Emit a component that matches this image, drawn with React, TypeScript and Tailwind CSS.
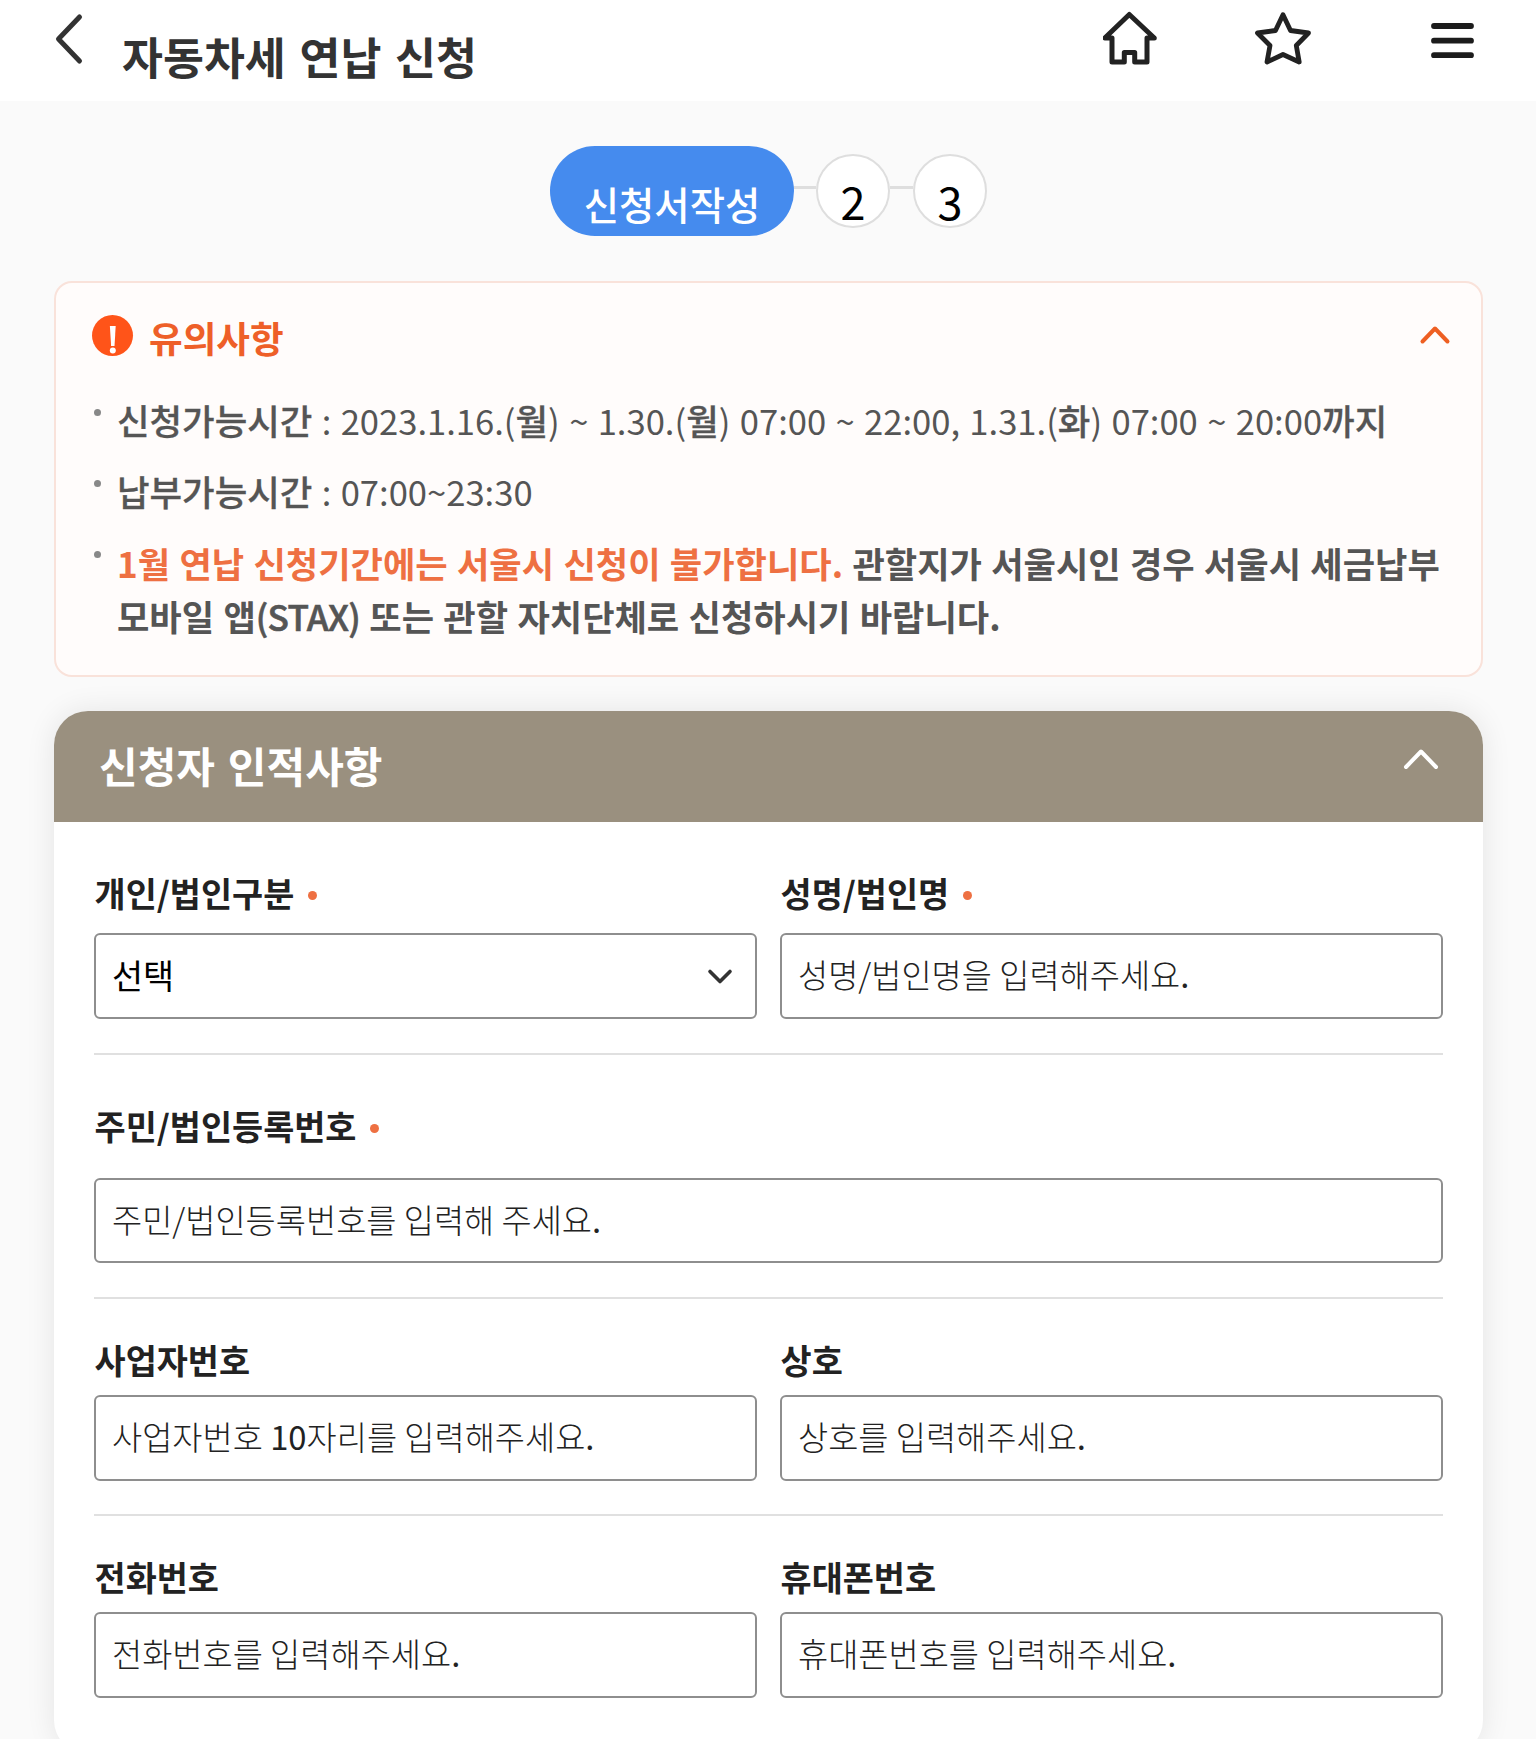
import React, { useState } from 'react';

interface FieldProps {
  label: string;
  required?: boolean;
  className?: string;
  children: React.ReactNode;
}

const Field: React.FC<FieldProps> = ({ label, required, className = 'gap-[11px]', children }) => (
  <div className={`flex flex-1 flex-col ${className}`}>
    <div className="flex h-[48px] items-center pl-[0.6px] pt-[1px] text-[33.8px] font-bold text-[#222]">
      <span>{label}</span>
      {required && <span className="ml-[13.6px] mt-[3px] size-[9px] rounded-full bg-[#ee7042]" />}
    </div>
    {children}
  </div>
);

const InputBox: React.FC<{ className?: string; children: React.ReactNode }> = ({ className = 'h-[86px]', children }) => (
  <div className={`flex items-center rounded-[6px] border-2 border-[#8e8e8e] bg-white px-[16px] pb-[4px] text-[32.8px] font-light text-[#222] ${className}`}>
    <span>{children}</span>
  </div>
);

const Row: React.FC<{ className: string; children: React.ReactNode }> = ({ className, children }) => (
  <div className={`flex gap-[23px] border-[#e0e0e0] ${className}`}>{children}</div>
);

const NoticeItem: React.FC<{ className?: string; children: React.ReactNode }> = ({ className = '', children }) => (
  <li className={`flex leading-[53px] text-[#555] ${className}`}>
    <span className="mr-[16px] mt-[15px] size-[7px] shrink-0 rounded-full bg-[#888]" />
    <p className="h-full whitespace-nowrap">{children}</p>
  </li>
);

// Hangul is set slightly heavier and larger than the digits around it
const Ko: React.FC<{ children: React.ReactNode }> = ({ children }) => (
  <span className="text-[35.4px] font-medium leading-none [-webkit-text-stroke:0.3px_#555]">{children}</span>
);

const App: React.FC = () => {
  const [noticeOpen, setNoticeOpen] = useState(true);
  const [formOpen, setFormOpen] = useState(true);

  return (
    <div className="h-[1739px] w-[1536px] overflow-hidden bg-[#fafafa] font-['Noto_Sans_CJK_KR',sans-serif]">
      {/* Header */}
      <header className="flex h-[101px] items-start bg-white">
        <svg className="ml-[54px] mt-[12px] shrink-0" width="30" height="54" viewBox="0 0 30 54" fill="none" stroke="#333" strokeWidth="5" strokeLinecap="round" strokeLinejoin="round">
          <path d="M25.5 5 L4.5 27 L25.5 49" />
        </svg>
        <h1 className="ml-[38px] mt-[23px] text-[44.5px] font-bold leading-[66px] text-[#333] [word-spacing:3.6px]">자동차세 연납 신청</h1>
        <div className="ml-auto mr-[59px] mt-[10px] flex items-start">
          <svg width="58" height="58" viewBox="0 0 58 58" fill="none" stroke="#222" strokeWidth="5" strokeLinejoin="round">
            <path d="M26.300 4.500 L1.800 28 H9 V52 H21.300 V42.500 H31.700 V52 H44 V28 H51.300 Z" />
          </svg>
          <svg className="ml-[93px] mr-[1px]" width="58" height="58" viewBox="0 0 58 58" fill="none" stroke="#222" strokeWidth="4.800" strokeLinejoin="round">
            <path d="M29 4.700 L36.500 20.500 L54.500 23 L42.300 35.500 L45.200 52 L29 44.500 L13 52 L16 35.500 L3.500 23 L21.500 20.500 Z" />
          </svg>
          <svg className="ml-[114px]" width="50" height="58" viewBox="0 0 50 58" fill="none" stroke="#1c1c1c" strokeWidth="5.800" strokeLinecap="round">
            <path d="M7 16 H44 M7 30.700 H44 M7 45.200 H44" />
          </svg>
        </div>
      </header>

      {/* Steps */}
      <div className="mt-[45px] flex h-[90px] items-center justify-center pl-[1px]">
        <div className="flex h-[90px] w-[244px] items-end justify-center rounded-full bg-[#458bee] pb-[5px] text-[38.4px] font-medium leading-[56px] text-white">
          신청서작성
        </div>
        <div className="mb-[8px] h-[3px] w-[22px] bg-[#dedede]" />
        <div className="flex size-[74px] items-end justify-center rounded-full border-2 border-[#dedede] bg-white text-[45px] leading-[51px] text-black">
          2
        </div>
        <div className="mb-[8px] h-[3px] w-[23px] bg-[#dedede]" />
        <div className="flex size-[74px] items-end justify-center rounded-full border-2 border-[#dedede] bg-white text-[45px] leading-[51px] text-black">
          3
        </div>
      </div>

      {/* Notice */}
      <section className="mx-[54px] mt-[45px] h-[396px] w-[1429px] rounded-[18px] border-2 border-[#f9e2da] bg-[#fffcfb] pl-[36px]">
        <div className="mt-[31px] flex h-[42px] items-start">
          <svg width="42" height="42" viewBox="0 0 42 42">
            <circle cx="20.500" cy="21.500" r="20.500" fill="#ff5419" />
            <path d="M17.900 12 H23.700 L22.500 32 H19.100 Z" fill="#fff" />
            <circle cx="20.800" cy="36.500" r="3" fill="#fff" />
          </svg>
          <h2 className="ml-[15px] -mt-[3px] text-[36.6px] font-bold leading-[54px] text-[#ee5f28]">유의사항</h2>
          <button className="ml-auto mr-[29px] mt-[10px]" onClick={() => setNoticeOpen(!noticeOpen)}>
            <svg width="34" height="22" viewBox="0 0 34 22" fill="none" stroke="#ee5f22" strokeWidth="4" strokeLinecap="round" strokeLinejoin="round">
              <path d="M4.500 17.500 L17 4.500 L29.500 17.500" />
            </svg>
          </button>
        </div>
        {noticeOpen && (
          <ul className="ml-[2px] mt-[38px]">
            <NoticeItem className="h-[53px] text-[34.6px] [word-spacing:1.6px]">
              <Ko>신청가능시간</Ko> : 2023.1.16.(<Ko>월</Ko>) ~ 1.30.(<Ko>월</Ko>) 07:00 ~ 22:00, 1.31.(<Ko>화</Ko>) 07:00 ~ 20:00<Ko>까지</Ko>
            </NoticeItem>
            <NoticeItem className="mt-[18px] h-[53px] text-[34.6px] [word-spacing:1.6px]">
              <Ko>납부가능시간</Ko> : 07:00~23:30
            </NoticeItem>
            <NoticeItem className="mt-[18px] text-[35.2px] font-bold [word-spacing:1.3px]">
              <span className="text-[#ee7042]">1월 연납 신청기간에는 서울시 신청이 불가합니다.</span> 관할지가 서울시인 경우 서울시 세금납부
              <br />
              모바일 앱<span className="font-medium tracking-[-0.7px] [-webkit-text-stroke:0.6px_#555]">(STAX)</span> 또는 관할 자치단체로 신청하시기 바랍니다.
            </NoticeItem>
          </ul>
        )}
      </section>

      {/* Applicant form */}
      <section className="mx-[54px] mt-[34px] h-[1043px] w-[1429px] overflow-hidden rounded-[34px] bg-white shadow-[0_0_30px_rgba(0,0,0,0.09)]">
        <div className="flex h-[111px] items-center bg-[#9a907f] pl-[45px] pr-[42px] text-white">
          <h2 className="mb-[3px] text-[42px] font-bold leading-[60px] [word-spacing:3.4px]">신청자 인적사항</h2>
          <button className="mb-[16px] ml-auto" onClick={() => setFormOpen(!formOpen)}>
            <svg width="40" height="26" viewBox="0 0 40 26" fill="none" stroke="currentColor" strokeWidth="4" strokeLinecap="round" strokeLinejoin="round">
              <path d="M5 21 L20 5.500 L35 21" />
            </svg>
          </button>
        </div>
        {formOpen && (
          <div className="px-[40px]">
            <Row className="h-[233px] border-b-2 pt-[47px]">
              <Field label="개인/법인구분" required className="gap-[16px]">
                <div className="flex h-[86px] items-center justify-between rounded-[6px] border-2 border-[#8e8e8e] bg-white pl-[16px] pr-[21px] text-[33.8px] text-black">
                  <span className="mb-[2px]">선택</span>
                  <svg width="28" height="20" viewBox="0 0 28 20" fill="none" stroke="#333" strokeWidth="3.600" strokeLinecap="round" strokeLinejoin="round">
                    <path d="M4 5.500 L14 15.500 L24 5.500" />
                  </svg>
                </div>
              </Field>
              <Field label="성명/법인명" required className="gap-[16px]">
                <InputBox>성명/법인명을 입력해주세요<span className="font-normal">.</span></InputBox>
              </Field>
            </Row>
            <Row className="h-[244px] border-b-2 pt-[47px]">
              <Field label="주민/법인등록번호" required className="gap-[28px]">
                <InputBox className="h-[85px]">주민/법인등록번호를 입력해 주세요<span className="font-normal">.</span></InputBox>
              </Field>
            </Row>
            <Row className="h-[217px] border-b-2 pt-[37px]">
              <Field label="사업자번호">
                <InputBox>사업자번호 <span className="font-normal">10</span>자리를 입력해주세요<span className="font-normal">.</span></InputBox>
              </Field>
              <Field label="상호">
                <InputBox>상호를 입력해주세요<span className="font-normal">.</span></InputBox>
              </Field>
            </Row>
            <Row className="pt-[37px]">
              <Field label="전화번호">
                <InputBox>전화번호를 입력해주세요<span className="font-normal">.</span></InputBox>
              </Field>
              <Field label="휴대폰번호">
                <InputBox>휴대폰번호를 입력해주세요<span className="font-normal">.</span></InputBox>
              </Field>
            </Row>
          </div>
        )}
      </section>
    </div>
  );
};

export default App;
